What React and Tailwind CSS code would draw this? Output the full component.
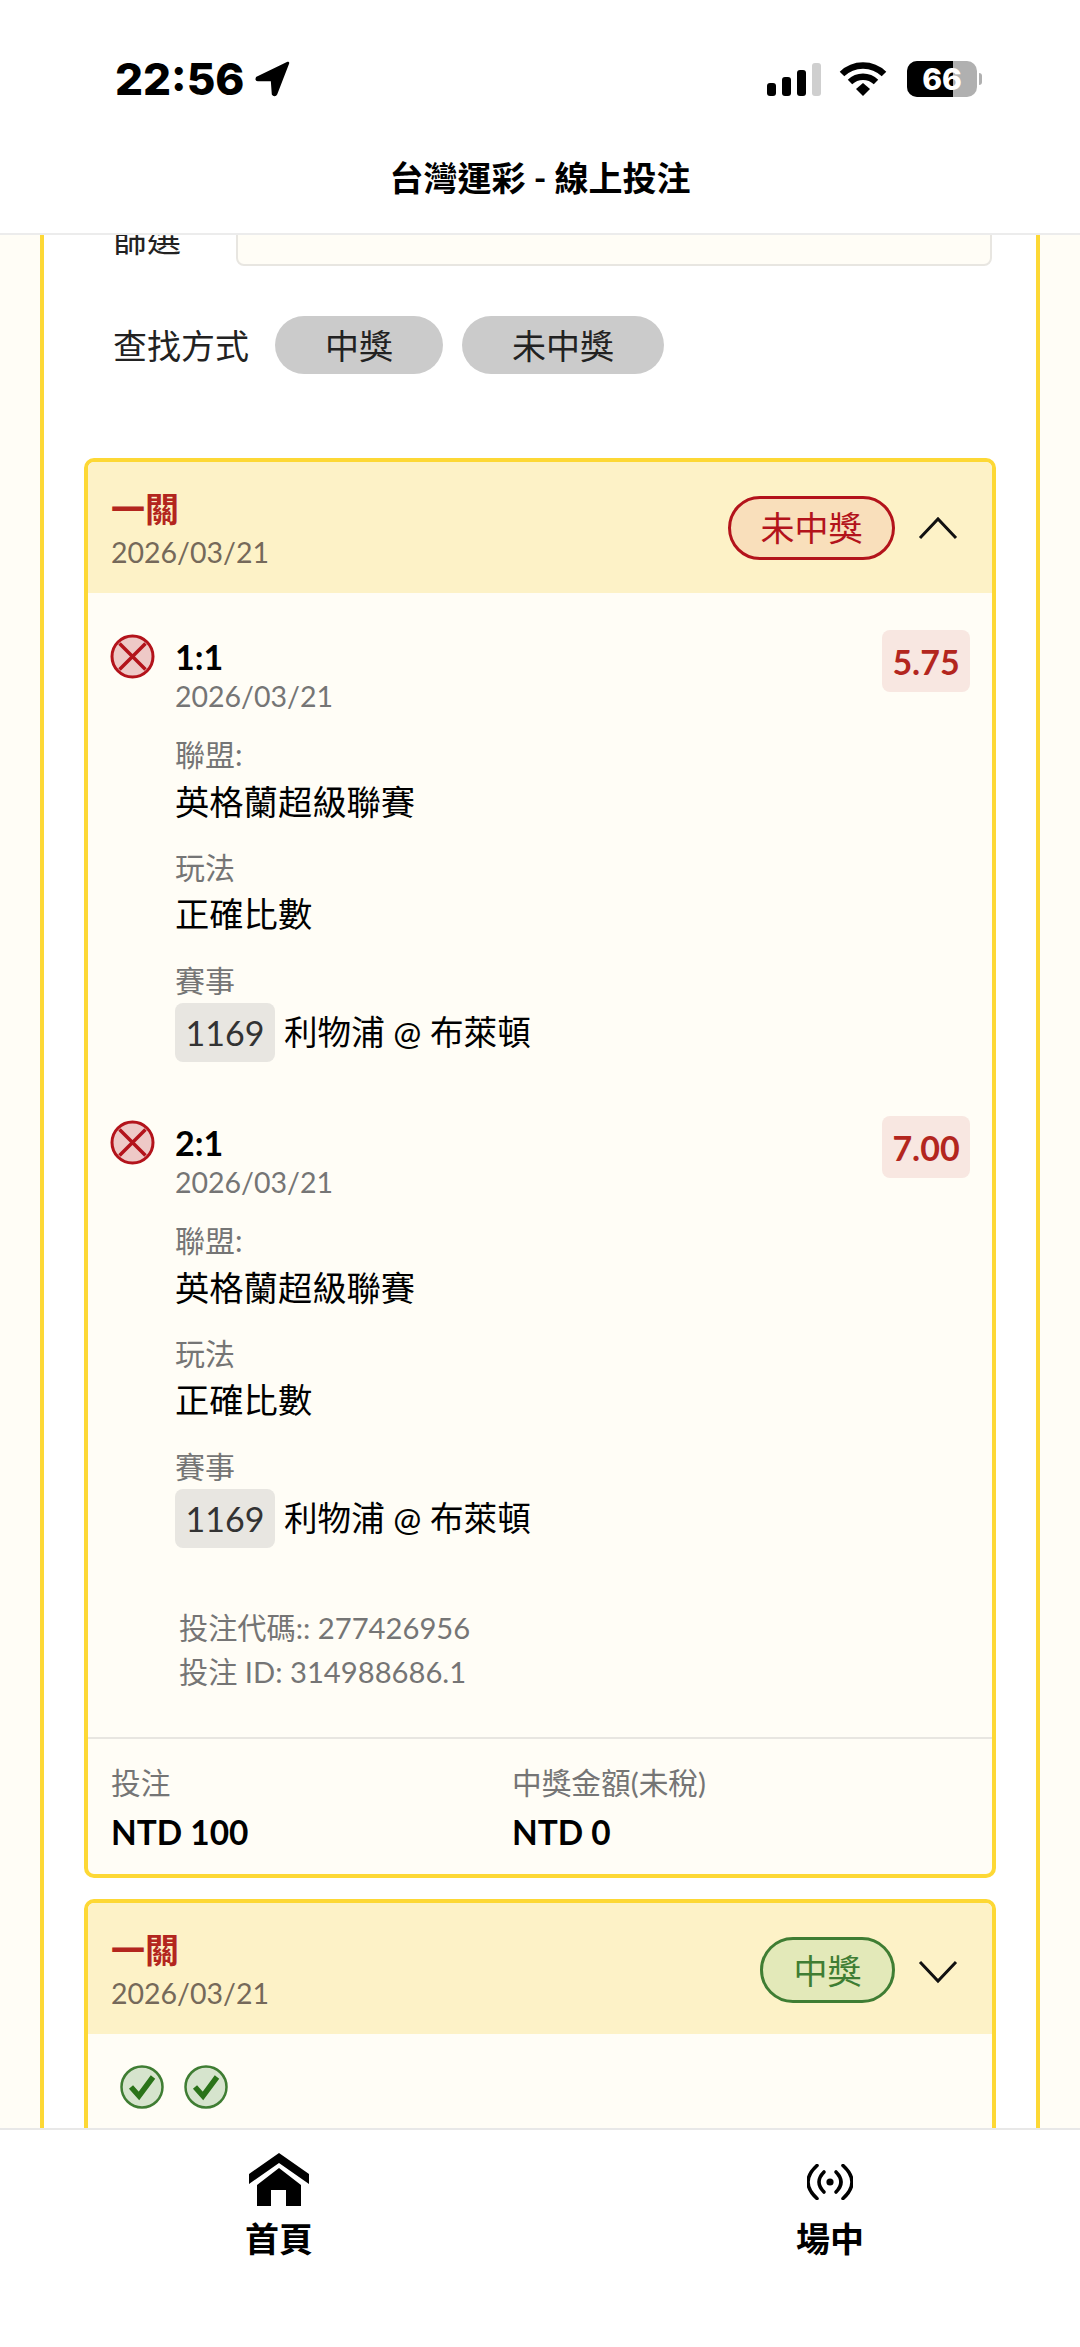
function StatusBar() {
  return (
    <div className="flex h-[156px] items-start justify-between pl-[115px] pr-[98px] pt-[54px]">
      <div className="flex items-center gap-[11px]">
        <span className="font-['Inter'] text-[44px] leading-[50px] font-extrabold text-black">22:56</span>
        <svg width="36" height="36" viewBox="0 0 36 36">
          <path d="M33 2 L2 17 Q1 19 3 19 L17 19 L18 33 Q20 35 21 33 Z" fill="#000" stroke="#000" strokeWidth="2.5" strokeLinejoin="round" />
        </svg>
      </div>
      <div className="flex items-center pt-[7px]">
        <div className="mr-[18px] flex h-[34px] items-end gap-[6px]">
          <div className="h-[13px] w-[9px] rounded-[3px] bg-black" />
          <div className="h-[19px] w-[9px] rounded-[3px] bg-black" />
          <div className="h-[26px] w-[9px] rounded-[3px] bg-black" />
          <div className="h-[33px] w-[9px] rounded-[3px] bg-[#cfcfcf]" />
        </div>
        <svg className="mr-[20px]" width="48" height="34" viewBox="0 0 48 34">
          <path d="M3 12 A30 30 0 0 1 45 12" fill="none" stroke="#000" strokeWidth="6.5" />
          <path d="M11 20 A19 19 0 0 1 37 20" fill="none" stroke="#000" strokeWidth="6.5" />
          <path d="M17 27 L24 21 L31 27 L24 34 Z" fill="#000" />
        </svg>
        <div className="flex items-center">
          <div className="relative flex h-[36px] w-[70px] items-center justify-center overflow-hidden rounded-[10px] bg-[#b0b0b0]">
            <div className="absolute inset-y-0 left-0 w-[46px] bg-black" />
            <span className="relative font-['Inter'] text-[30px] leading-[36px] font-extrabold text-white">66</span>
          </div>
          <div className="ml-[2px] h-[12px] w-[3px] rounded-r-[3px] bg-[#b0b0b0]" />
        </div>
      </div>
    </div>
  );
}

function Chevron({ up }) {
  return (
    <svg className={up ? "" : "mt-[3px]"} width="40" height="24" viewBox="0 0 40 24">
      <path d={up ? "M2 22 L20 3 L38 22" : "M2 2 L20 21 L38 2"} fill="none" stroke="#111" strokeWidth="3" />
    </svg>
  );
}

function CrossIcon() {
  return (
    <svg width="45" height="45" viewBox="0 0 45 45">
      <circle cx="22.5" cy="22.5" r="20.5" fill="#eec9c7" stroke="#b3131b" strokeWidth="3" />
      <path d="M9.5 9.5 L35.5 35.5 M35.5 9.5 L9.5 35.5" stroke="#b3131b" strokeWidth="3.5" />
    </svg>
  );
}

function CheckIcon() {
  return (
    <svg width="44" height="44" viewBox="0 0 44 44">
      <circle cx="22" cy="22" r="20.5" fill="#d6e4cd" stroke="#3f7d33" strokeWidth="2.5" />
      <path d="M11 22 L19 31 L33 12" fill="none" stroke="#2a7319" strokeWidth="5.5" />
    </svg>
  );
}

function HomeIcon() {
  return (
    <svg width="60" height="54" viewBox="0 0 60 54">
      <path d="M30 0 L60 21 L60 31 L30 10 L0 31 L0 21 Z" fill="#000" />
      <path d="M30 15 L52 32 L52 53 L37 53 L37 37 L22 37 L22 53 L8 53 L8 32 Z" fill="#000" />
    </svg>
  );
}

function LiveIcon() {
  return (
    <svg width="46" height="36" viewBox="0 0 46 36" fill="none" stroke="#000" strokeWidth="3.6" strokeLinecap="round">
      <circle cx="23" cy="18" r="3.6" fill="#000" stroke="none" />
      <path d="M17 8 Q7 18 17 28 M29 8 Q39 18 29 28" />
      <path d="M10 1.5 Q-8 18 10 34.5 M36 1.5 Q54 18 36 34.5" />
    </svg>
  );
}

function Leg({ score, odds }) {
  return (
    <div className="flex items-start pl-[22px] pr-[22px]">
      <div className="-mt-[3px] flex w-[65px] shrink-0">
        <CrossIcon />
      </div>
      <div className="flex-1">
        <div className="text-[34px] leading-[40px] font-bold text-black">{score}</div>
        <div className="mt-px text-[28.5px] leading-[36px] text-[#757575]">2026/03/21</div>
        <div className="mt-[20px] text-[30px] leading-[40px] text-[#757575]">聯盟:</div>
        <div className="mt-[4px] text-[34.3px] leading-[48px] text-black">英格蘭超級聯賽</div>
        <div className="mt-[21px] text-[30px] leading-[40px] text-[#757575]">玩法</div>
        <div className="mt-[3px] text-[34.3px] leading-[48px] text-black">正確比數</div>
        <div className="mt-[22px] text-[30px] leading-[40px] text-[#757575]">賽事</div>
        <div className="mt-[3px] flex items-center">
          <span className="flex h-[59px] w-[100px] items-center justify-center rounded-[8px] bg-[#e8e6e1] text-[34px] text-[#333]">1169</span>
          <span className="ml-[9px] text-[33.6px] text-black">利物浦 @ 布萊頓</span>
        </div>
      </div>
      <div className="-mt-[7px] flex h-[62px] w-[88px] items-center justify-center rounded-[8px] bg-[#f8e7e1] text-[34px] font-bold text-[#b3261e]">{odds}</div>
    </div>
  );
}

function CardHeader({ children, up }) {
  return (
    <div className="flex h-[131px] items-center justify-between bg-[#fdf2c7] pl-[23px] pr-[34px]">
      <div className="pt-[2px]">
        <div className="text-[34px] leading-[44px] font-bold text-[#b3261e]">一關</div>
        <div className="mt-[2px] text-[28.5px] leading-[38px] text-[#75695a]">2026/03/21</div>
      </div>
      <div className={up ? "flex items-center gap-[23px]" : "flex items-center gap-[23px] pt-[3px]"}>
        {children}
        <Chevron up={up} />
      </div>
    </div>
  );
}

export default function App() {
  return (
    <div className="flex h-[2347px] w-[1080px] flex-col overflow-hidden bg-white font-['Lato','Noto_Sans_CJK_TC',sans-serif]">
      <header className="h-[235px] shrink-0 border-b-2 border-[#ececec] bg-white">
        <StatusBar />
        <div className="text-center text-[34px] leading-[44px] font-bold text-black">台灣運彩 - 線上投注</div>
      </header>

      <main className="min-h-0 flex-1 overflow-hidden bg-[#fffdf6] px-[40px]">
        <div className="-mt-[30px] border-x-4 border-[#fdd835] bg-white pb-[40px]">
          <div className="flex items-center pl-[69px] pr-[44px]">
            <span className="w-[123px] pt-[6px] text-[34px] leading-[50px] text-[#222]">篩選</span>
            <div className="h-[61px] flex-1 rounded-[8px] border-2 border-[#e8e6e1] bg-[#fffdf6]" />
          </div>

          <div className="mt-[50px] flex items-center pl-[69px]">
            <span className="mr-[26px] text-[34px] text-[#222]">查找方式</span>
            <span className="mr-[19px] flex h-[58px] items-center rounded-full bg-[#cbcbcb] px-[50px] text-[34px] text-[#222]">中獎</span>
            <span className="flex h-[58px] items-center rounded-full bg-[#cbcbcb] px-[50px] text-[34px] text-[#222]">未中獎</span>
          </div>

          <div className="mx-[40px] mt-[84px] overflow-hidden rounded-[10px] border-4 border-[#fdd835] bg-[#fffdf6]">
            <CardHeader up>
              <span className="flex h-[64px] w-[167px] items-center justify-center rounded-full border-[3px] border-[#b3131b] bg-[#f9dfbb] text-[34px] text-[#b3131b]">未中獎</span>
            </CardHeader>
            <div className="pt-[44px]">
              <Leg score="1:1" odds="5.75" />
              <div className="mt-[61px]">
                <Leg score="2:1" odds="7.00" />
              </div>
              <div className="mt-[58px] pl-[91px] text-[29.2px] leading-[44px] text-[#757575]">
                <div>投注代碼:: 277426956</div>
                <div>投注 ID: 314988686.1</div>
              </div>
              <div className="mt-[43px] flex border-t-2 border-[#e8e6e1] pl-[23px] pt-[24px] pb-[18px]">
                <div className="w-[401px]">
                  <div className="text-[29.7px] leading-[40px] text-[#757575]">投注</div>
                  <div className="mt-[5px] text-[33.4px] leading-[48px] font-bold text-black">NTD 100</div>
                </div>
                <div>
                  <div className="text-[29.7px] leading-[40px] text-[#757575]">中獎金額(未稅)</div>
                  <div className="mt-[5px] text-[33.4px] leading-[48px] font-bold text-black">NTD 0</div>
                </div>
              </div>
            </div>
          </div>

          <div className="mx-[40px] mt-[21px] overflow-hidden rounded-[10px] border-4 border-[#fdd835] bg-[#fffdf6]">
            <CardHeader>
              <span className="flex h-[66px] w-[135px] items-center justify-center rounded-full border-[3px] border-[#3f7d33] bg-[#e3e9b9] text-[34px] text-[#3f7d33]">中獎</span>
            </CardHeader>
            <div className="flex gap-[20px] pl-[32px] pt-[31px] pb-[40px]">
              <CheckIcon />
              <CheckIcon />
            </div>
          </div>
        </div>
      </main>

      <footer className="flex h-[219px] shrink-0 gap-[151px] border-t-2 border-[#e8e8e8] bg-white pl-[79px] pt-[23px]">
        <div className="flex w-[400px] flex-col items-center">
          <div className="flex h-[54px] items-center">
            <HomeIcon />
          </div>
          <div className="mt-[8px] text-[34px] leading-[48px] font-bold text-black">首頁</div>
        </div>
        <div className="flex w-[400px] flex-col items-center">
          <div className="flex h-[54px] items-center pt-[4px]">
            <LiveIcon />
          </div>
          <div className="mt-[8px] text-[34px] leading-[48px] font-bold text-black">場中</div>
        </div>
      </footer>
    </div>
  );
}
